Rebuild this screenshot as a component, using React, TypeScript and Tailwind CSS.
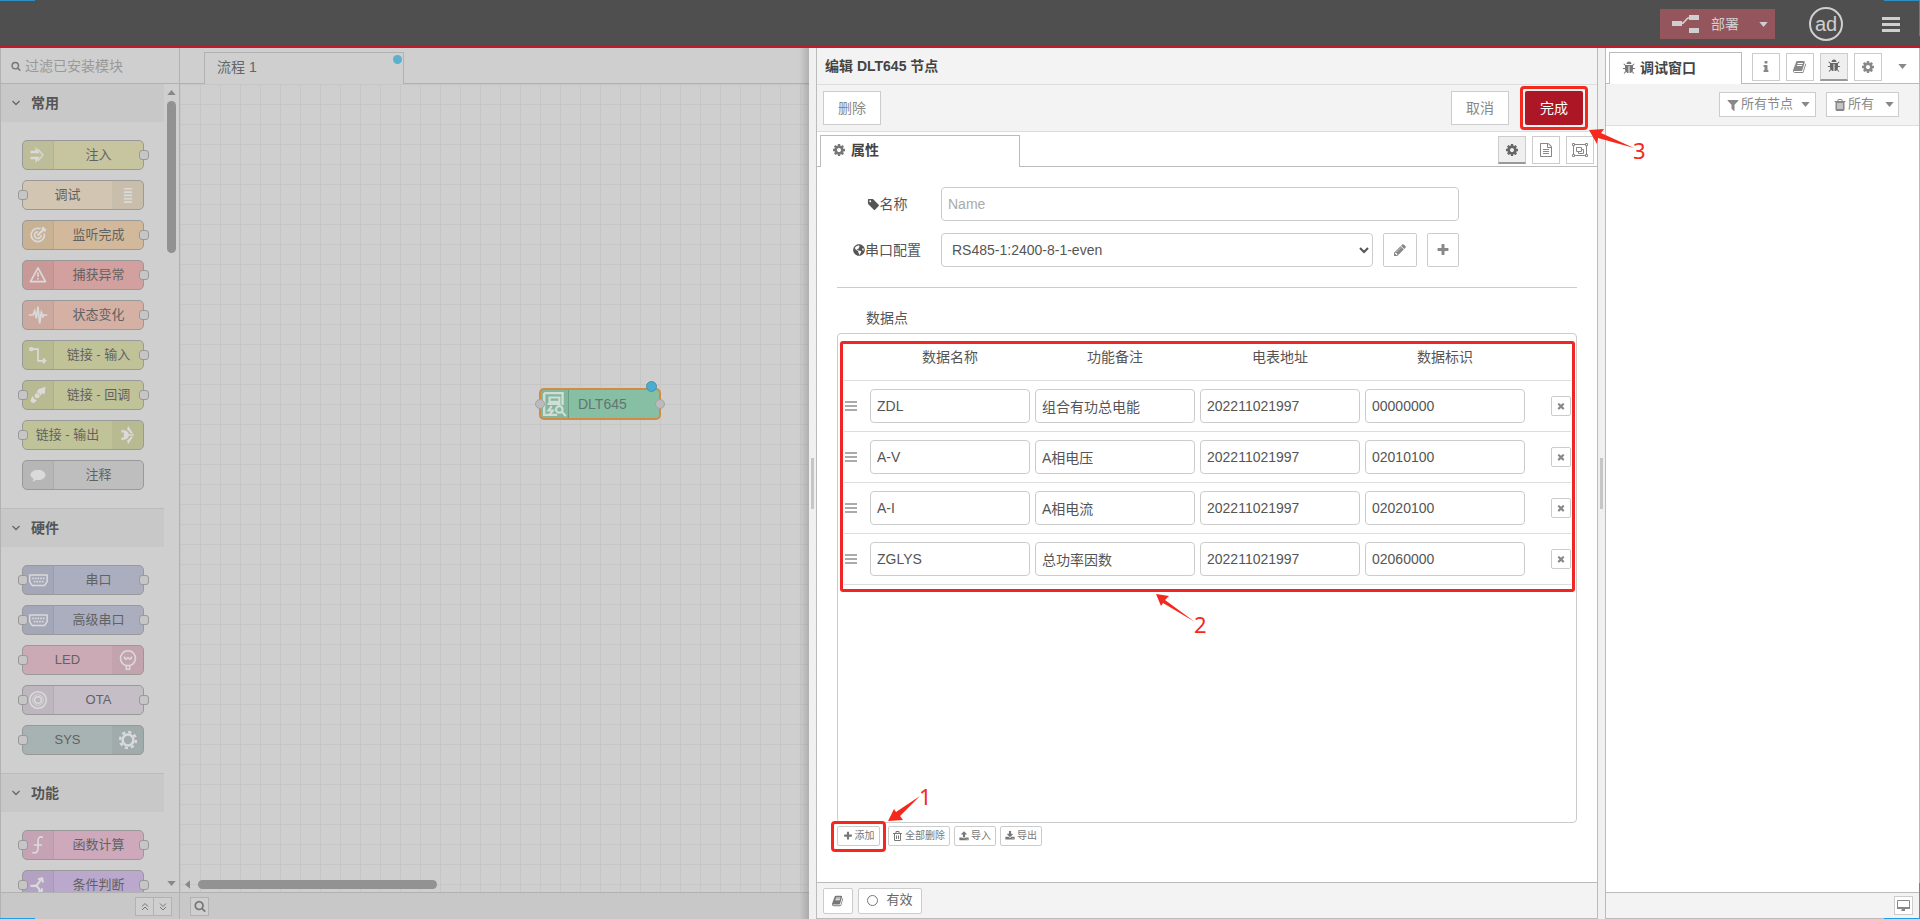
import React from "react";
import { FaGlobeAmericas } from "react-icons/fa";

const FA = {
  cog: "M1152 896q0-106-75-181t-181-75-181 75-75 181 75 181 181 75 181-75 75-181zm512-109v222q0 12-8 23t-20 13l-185 28q-19 54-39 91 35 50 107 138 10 12 10 25t-9 23q-27 37-99 108t-94 71q-12 0-26-9l-138-108q-44 23-91 38-16 136-29 186-7 28-36 28h-222q-14 0-24.5-8.5t-11.5-21.5l-28-184q-49-16-90-37l-141 107q-10 9-25 9-14 0-25-11-126-114-165-168-7-10-7-23 0-12 8-23 15-21 51-66.5t54-70.5q-27-50-41-99l-183-27q-13-2-21-12.5t-8-23.5v-222q0-12 8-23t19-13l186-28q14-46 39-92-40-57-107-138-10-12-10-24 0-10 9-23 26-36 98.5-107.5t94.5-71.5q13 0 26 10l138 107q44-23 91-38 16-136 29-186 7-28 36-28h222q14 0 24.5 8.5t11.5 21.5l28 184q49 16 90 37l142-107q9-9 24-9 13 0 25 10 129 119 165 170 7 8 7 22 0 12-8 23-15 21-51 66.5t-54 70.5q26 50 41 98l183 28q13 2 21 12.5t8 23.5z",
  search: "M1216 832q0-185-131.5-316.5t-316.5-131.5-316.5 131.5-131.5 316.5 131.5 316.5 316.5 131.5 316.5-131.5 131.5-316.5zm512 832q0 52-38 90t-90 38q-54 0-90-38l-343-342q-179 124-399 124-143 0-273.5-55.5t-225-150-150-225-55.5-273.5 55.5-273.5 150-225 225-150 273.5-55.5 273.5 55.5 225 150 150 225 55.5 273.5q0 220-124 399l343 343q37 37 37 90z",
  plus: "M1600 736v192q0 40-28 68t-68 28h-416v416q0 40-28 68t-68 28h-192q-40 0-68-28t-28-68v-416h-416q-40 0-68-28t-28-68v-192q0-40 28-68t68-28h416v-416q0-40 28-68t68-28h192q40 0 68 28t28 68v416h416q40 0 68 28t28 68z",
  pencil: "M491 1536l91-91-235-235-91 91v107h128v128h107zm523-928q0-22-22-22-10 0-17 7l-542 542q-7 7-7 17 0 22 22 22 10 0 17-7l542-542q7-7 7-17zm-54-192l416 416-832 832h-416v-416zm683 96q0 53-37 90l-166 166-416-416 166-165q36-38 90-38 53 0 91 38l235 234q37 39 37 91z",
  file: "M1596 380q28 28 48 76t20 88v1152q0 40-28 68t-68 28h-1344q-40 0-68-28t-28-68v-1600q0-40 28-68t68-28h896q40 0 88 20t76 48zm-444-244v376h376q-10-29-22-41l-313-313q-12-12-41-22zm384 1528v-1024h-416q-40 0-68-28t-28-68v-416h-768v1536h1280zm-1024-864q0-14 9-23t23-9h704q14 0 23 9t9 23v64q0 14-9 23t-23 9h-704q-14 0-23-9t-9-23v-64zm736 224q14 0 23 9t9 23v64q0 14-9 23t-23 9h-704q-14 0-23-9t-9-23v-64q0-14 9-23t23-9h704zm0 256q14 0 23 9t9 23v64q0 14-9 23t-23 9h-704q-14 0-23-9t-9-23v-64q0-14 9-23t23-9h704z",
  book: "M1639 478q40 57 18 129l-275 906q-19 64-76.5 107.5t-122.5 43.5h-923q-77 0-148.5-53.5t-99.5-131.5q-24-67-2-127 0-4 3-27t4-37q1-8-3-21.5t-3-19.5q2-11 8-21t16.5-23.5 16.5-23.5q23-38 45-91.5t30-91.5q3-10 .5-30t-.5-28q3-11 17-28t17-23q21-36 42-92t25-90q1-9-2.5-32t.5-28q4-13 22-30.5t22-22.5q19-26 42.5-84.5t27.5-96.5q1-8-3-25.5t-2-26.5q2-8 9-18t18-23 17-21q8-12 16.5-30.5t15-35 16-36 19.5-32 26.5-23.5 36-11.5 47.5 5.5l-1 3q38-9 51-9h761q74 0 114 56t18 130l-274 906q-36 119-71.5 153.5t-128.5 34.5h-869q-27 0-38 15-11 16-1 43 24 70 144 70h923q29 0 56-15.5t35-41.5l300-987q7-22 5-57 38 15 59 43zm-1064 2q-4 13 2 22.5t20 9.5h608q13 0 25.5-9.5t16.5-22.5l21-64q4-13-2-22.5t-20-9.5h-608q-13 0-25.5 9.5t-16.5 22.5zm-83 256q-4 13 2 22.5t20 9.5h608q13 0 25.5-9.5t16.5-22.5l21-64q4-13-2-22.5t-20-9.5h-608q-13 0-25.5 9.5t-16.5 22.5z",
  tag: "M576 448q0-53-37.5-90.5t-90.5-37.5-90.5 37.5-37.5 90.5 37.5 90.5 90.5 37.5 90.5-37.5 37.5-90.5zm1067 576q0 53-37 90l-491 492q-39 37-91 37-53 0-90-37l-715-716q-38-37-64.5-101t-26.5-117v-416q0-52 38-90t90-38h416q53 0 117 26.5t102 64.5l715 714q37 39 37 91z",
  times: "M1490 1322q0 40-28 68l-136 136q-28 28-68 28t-68-28l-294-294-294 294q-28 28-68 28t-68-28l-136-136q-28-28-28-68t28-68l294-294-294-294q-28-28-28-68t28-68l136-136q28-28 68-28t68 28l294 294 294-294q28-28 68-28t68 28l136 136q28 28 28 68t-28 68l-294 294 294 294q28 28 28 68z",
  download: "M1344 1344q0-26-19-45t-45-19-45 19-19 45 19 45 45 19 45-19 19-45zm256 0q0-26-19-45t-45-19-45 19-19 45 19 45 45 19 45-19 19-45zm128-224v320q0 40-28 68t-68 28h-1472q-40 0-68-28t-28-68v-320q0-40 28-68t68-28h465l135 136q58 56 136 56t136-56l136-136h464q40 0 68 28t28 68zm-325-569q17 41-14 70l-448 448q-18 19-45 19t-45-19l-448-448q-31-29-14-70 17-39 59-39h256v-448q0-26 19-45t45-19h256q26 0 45 19t19 45v448h256q42 0 59 39z",
  upload: "M1344 1472q0-26-19-45t-45-19-45 19-19 45 19 45 45 19 45-19 19-45zm256 0q0-26-19-45t-45-19-45 19-19 45 19 45 45 19 45-19 19-45zm128-224v320q0 40-28 68t-68 28h-1472q-40 0-68-28t-28-68v-320q0-40 28-68t68-28h427q21 56 70.5 92t110.5 36h256q61 0 110.5-36t70.5-92h427q40 0 68 28t28 68zm-325-648q-17 40-59 40h-256v448q0 26-19 45t-45 19h-256q-26 0-45-19t-19-45v-448h-256q-42 0-59-40-17-39 14-69l448-448q18-19 45-19t45 19l448 448q31 30 14 69z",
  filter: "M1595 295q17 41-14 70l-493 493v742q0 42-39 59-13 5-25 5-27 0-45-19l-256-256q-19-19-19-45v-486l-493-493q-31-29-14-70 17-39 59-39h1280q42 0 59 39z",
  trash: "M704 1376v-704q0-14-9-23t-23-9h-64q-14 0-23 9t-9 23v704q0 14 9 23t23 9h64q14 0 23-9t9-23zm256 0v-704q0-14-9-23t-23-9h-64q-14 0-23 9t-9 23v704q0 14 9 23t23 9h64q14 0 23-9t9-23zm256 0v-704q0-14-9-23t-23-9h-64q-14 0-23 9t-9 23v704q0 14 9 23t23 9h64q14 0 23-9t9-23zm-544-992h448l-48-117q-7-9-17-11h-317q-10 2-17 11zm928 32v64q0 14-9 23t-23 9h-96v948q0 83-47 143.5t-113 60.5h-832q-66 0-113-58.5t-47-141.5v-952h-96q-14 0-23-9t-9-23v-64q0-14 9-23t23-9h309l70-167q15-37 54-63t79-26h320q40 0 79 26t54 63l70 167h309q14 0 23 9t9 23z",
  bug: "M1696 960q0 26-19 45t-45 19h-224q0 171-67 290l208 209q19 19 19 45t-19 45q-18 19-45 19t-45-19l-198-197q-5 5-15 13t-42 28.5-65 36.5-82 29-97 13v-896h-128v896q-51 0-101.5-13.5t-87-33-66-39-43.5-32.5l-15-14-183 207q-20 21-48 21-24 0-43-16-19-18-20.5-44.5t15.5-46.5l202-227q-58-114-58-274h-224q-26 0-45-19t-19-45 19-45 45-19h224v-294l-173-173q-19-19-19-45t19-45 45-19 45 19l173 173h844l173-173q19-19 45-19t45 19 19 45-19 45l-173 173v294h224q26 0 45 19t19 45zm-480-576h-640q0-133 93.5-226.5t226.5-93.5 226.5 93.5 93.5 226.5z",
  info: "M1216 1344v128q0 26-19 45t-45 19h-512q-26 0-45-19t-19-45v-128q0-26 19-45t45-19h64v-384h-64q-26 0-45-19t-19-45v-128q0-26 19-45t45-19h384q26 0 45 19t19 45v576h64q26 0 45 19t19 45zm-128-1152v192q0 26-19 45t-45 19h-256q-26 0-45-19t-19-45v-192q0-26 19-45t45-19h256q26 0 45 19t19 45z",
};

function Fa({ name, className = "size-3.5" }: { name: keyof typeof FA; className?: string }) {
  return (
    <svg viewBox="0 0 1792 1792" fill="currentColor" aria-hidden="true" className={"shrink-0 " + className}>
      <path d={FA[name]} />
    </svg>
  );
}

function Caret({ className = "" }: { className?: string }) {
  return (
    <svg viewBox="0 0 10 6" fill="currentColor" aria-hidden="true" className={"h-[5px] w-[9px] shrink-0 " + className}>
      <path d="M0 0h10L5 6z" />
    </svg>
  );
}

function TrashOutline() {
  return (
    <svg viewBox="0 0 10 11" fill="none" stroke="currentColor" className="h-[11px] w-2.5 shrink-0" aria-hidden="true">
      <path d="M0 2.500h9M3 2V.5h3V2M1.500 2.500v7h6v-7M3.500 4.500V8M5.500 4.500V8" />
    </svg>
  );
}

function ObjectGroup() {
  return (
    <svg viewBox="0 0 16 14" fill="none" stroke="currentColor" className="h-3.5 w-4" aria-hidden="true">
      <path d="M2.500 1.500h11M2.500 12.500h11M1.500 2.500v9M14.500 2.500v9" />
      <path d="M.5.5h2v2h-2zM13.500.5h2v2h-2zM.5 11.500h2v2h-2zM13.500 11.500h2v2h-2z" />
      <path d="M4.500 4.500h5v4h-5zM9.500 6.500h2v4h-5v-2" />
    </svg>
  );
}

const icons: Record<string, React.ReactNode> = {
  inject: (
    <g fill="currentColor">
      <path d="M3 7h6V2l5 8H3zM3 14h11l-5 8v-5H3z" />
      <path d="M12 5l6 7-6 7" fill="none" stroke="currentColor" strokeWidth="1.500" />
    </g>
  ),
  debug: <path d="M7 4.500h10M7 8.500h10M7 12.500h10M7 16.500h10M7 20.500h10" stroke="currentColor" strokeWidth="2" />,
  complete: (
    <g fill="none" stroke="currentColor" strokeWidth="2">
      <path d="M15 4.600A8 8 0 1 0 19.500 10" />
      <path d="M12 8.200a4 4 0 1 0 3.800 3.800" />
      <path d="M11.500 12.500L18 6" strokeWidth="2.500" />
      <path d="M16 3l1 4 4 1 1-3-2-1-1-2z" fill="currentColor" stroke="none" />
    </g>
  ),
  warn: (
    <g fill="none" stroke="currentColor" strokeWidth="2">
      <path d="M12 3.500L21 20H3z" strokeLinejoin="round" />
      <path d="M12 9v5M12 15.500v2" />
    </g>
  ),
  pulse: <path d="M1 12h5l2-5 2 9 2-14 2 20 2-13 2 5 1-2h4" fill="none" stroke="currentColor" strokeWidth="2" />,
  linkin: (
    <g fill="none" stroke="currentColor" strokeWidth="2">
      <path d="M4 5h8v14h8" />
      <path d="M18 16l3 3-3 3" />
      <ellipse cx="4" cy="5" rx="2" ry="1.500" />
    </g>
  ),
  linkcall: (
    <g fill="currentColor">
      <path d="M12 5l9-3-1 9-3-1-2 3a5 5 0 0 0-5-4l2-3zM4 16l2-3a5 5 0 0 0 5 5l-4 4-4-2z" />
      <circle cx="11" cy="13" r="3" />
    </g>
  ),
  linkout: (
    <g fill="currentColor">
      <path d="M12 1l6 9h-3q-1-3-4-4zM12 23l6-9h-3q-1 3-4 4z" />
      <path d="M4 6q8 0 9 5h6v2h-6q-1 5-9 5v-3h3v-6H4z" />
    </g>
  ),
  comment: <path d="M12 6c5 0 9 2.500 9 6s-4 6-9 6l-2-.2Q8 20 5 20q2-2 1.500-3.500Q3 15 3 12c0-3.500 4-6 9-6z" fill="currentColor" />,
  serial: (
    <g fill="none" stroke="currentColor" strokeWidth="1.800">
      <path d="M2 6h21v8l-3 4.500H5L2 14z" strokeLinejoin="round" />
      <path d="M5 10h15M7 14h12" strokeDasharray="2 1.200" strokeWidth="2" />
    </g>
  ),
  led: (
    <g fill="none" stroke="currentColor" strokeWidth="1.800">
      <path d="M9 18.500a9 9 0 1 1 6 0z" />
      <path d="M8 11v-2l2 2 2-2 2 2 2-2v2M10 18v5h4v-5" />
    </g>
  ),
  ota: (
    <g fill="none" stroke="currentColor" strokeWidth="1.800">
      <circle cx="12" cy="12" r="10" />
      <circle cx="12" cy="12" r="6.500" strokeWidth="1" />
      <circle cx="12" cy="12" r="4" />
    </g>
  ),
  gear: (
    <g fill="none" stroke="currentColor">
      <circle cx="12" cy="12" r="6.500" strokeWidth="3" />
      <circle cx="12" cy="12" r="9.500" strokeWidth="3" strokeDasharray="3.730 3.730" />
    </g>
  ),
  fn: <path d="M18 3q-6-3-6 5v8q0 7-7 5M7 12h10" fill="none" stroke="currentColor" strokeWidth="2" />,
  branch: (
    <g fill="none" stroke="currentColor" strokeWidth="2.500">
      <path d="M3 13h5q3 0 5-4l3-4M8 13q4 0 7 7" />
      <path d="M12 5l5-1 1 5M12 20l4 1 1-5" />
    </g>
  ),
  meter: (
    <g fill="none" stroke="currentColor" strokeWidth="2">
      <path d="M2 2v20h12M2 2h17v11" strokeWidth="2.200" />
      <path d="M7 6h9v4H7zM5 12h12" />
      <path d="M9 14l-3 4h4l-3 4" />
      <circle cx="16" cy="17" r="3" />
      <path d="M18 19l4 4" />
    </g>
  ),
};

type NodeDef = { label: string; bg: string; icon: string; right?: boolean; inp?: boolean; out?: boolean };

const groups: { title: string; nodes: NodeDef[] }[] = [
  {
    title: "常用",
    nodes: [
      { label: "注入", bg: "bg-[#c6c5a0]", icon: "inject", out: true },
      { label: "调试", bg: "bg-[#d2c6b2]", icon: "debug", right: true, inp: true },
      { label: "监听完成", bg: "bg-[#d2b99b]", icon: "complete", out: true },
      { label: "捕获异常", bg: "bg-[#d2a09f]", icon: "warn", out: true },
      { label: "状态变化", bg: "bg-[#d5b0a5]", icon: "pulse", out: true },
      { label: "链接 - 输入", bg: "bg-[#c0c298]", icon: "linkin", out: true },
      { label: "链接 - 回调", bg: "bg-[#c0c298]", icon: "linkcall", inp: true, out: true },
      { label: "链接 - 输出", bg: "bg-[#c0c298]", icon: "linkout", right: true, inp: true },
      { label: "注释", bg: "bg-[#bebebe]", icon: "comment" },
    ],
  },
  {
    title: "硬件",
    nodes: [
      { label: "串口", bg: "bg-[#abaebf]", icon: "serial", inp: true, out: true },
      { label: "高级串口", bg: "bg-[#abaebf]", icon: "serial", inp: true, out: true },
      { label: "LED", bg: "bg-[#cbaab5]", icon: "led", right: true, inp: true },
      { label: "OTA", bg: "bg-[#c6bec6]", icon: "ota", inp: true, out: true },
      { label: "SYS", bg: "bg-[#a7b2b2]", icon: "gear", right: true, inp: true },
    ],
  },
  {
    title: "功能",
    nodes: [
      { label: "函数计算", bg: "bg-[#cea9bc]", icon: "fn", inp: true, out: true },
      { label: "条件判断", bg: "bg-[#bba9cd]", icon: "branch", inp: true, out: true },
    ],
  },
];

function Port({ side }: { side: string }) {
  return <span className={"absolute top-[9px] size-2.5 rounded-[3px] border border-[#999] bg-[#c6c6c6] " + side} />;
}

function PaletteNode({ node }: { node: NodeDef }) {
  return (
    <div
      className={
        "relative flex h-[30px] w-[122px] items-stretch rounded-[5px] border border-[#999] " +
        node.bg +
        (node.right ? " flex-row-reverse" : "")
      }
    >
      <span
        className={
          "flex w-[31px] items-center justify-center bg-black/4 text-[#dadada] " +
          (node.right ? "rounded-r-[4px]" : "rounded-l-[4px] border-r border-black/6")
        }
      >
        <svg viewBox="0 0 24 24" className="size-5" aria-hidden="true">
          {icons[node.icon]}
        </svg>
      </span>
      <span className="flex-1 text-center text-[13px] leading-7 whitespace-nowrap text-[#626262]">{node.label}</span>
      {node.inp && <Port side="-left-[5px]" />}
      {node.out && <Port side="-right-[6px]" />}
    </div>
  );
}

function Palette() {
  return (
    <aside className="flex w-45 shrink-0 flex-col border-x border-[#b2b2b2] bg-[#cfcfcf]">
      <label className="flex h-9 shrink-0 items-center gap-1 border-b border-[#b2b2b2] pl-2.5 text-[#777]">
        <Fa name="search" className="size-2.5" />
        <input
          aria-label="过滤已安装模块"
          placeholder="过滤已安装模块"
          className="w-full min-w-0 bg-transparent text-sm outline-none placeholder:text-[#999]"
        />
      </label>
      <div className="flex min-h-0 flex-1">
        <div className="min-w-0 flex-1 overflow-hidden">
          {groups.map((g, i) => (
            <section key={g.title} className={i ? "border-t border-[#bbb]" : ""}>
              <button className="flex h-[38px] w-full items-center gap-[11px] bg-[#c8c8c8] pl-[11px] text-sm font-bold text-[#555]">
                <svg viewBox="0 0 8 6" className="h-1.5 w-2" fill="none" stroke="#666" strokeWidth="1.300" aria-hidden="true">
                  <path d="M.5 1L4 4.500 7.500 1" />
                </svg>
                {g.title}
              </button>
              <div className="flex flex-col gap-2.5 py-4.5 pl-[21px]">
                {g.nodes.map((n) => (
                  <PaletteNode key={n.label} node={n} />
                ))}
              </div>
            </section>
          ))}
        </div>
        <div className="flex w-[15px] shrink-0 flex-col items-center pt-1.5 pb-1.5 text-[#888]">
          <Caret className="rotate-180" />
          <span className="mt-1.5 h-[152px] w-[9px] rounded-full bg-[#929292]" />
          <Caret className="mt-auto" />
        </div>
      </div>
      <footer className="flex h-[27px] shrink-0 items-center justify-end border-t border-[#b2b2b2] bg-[#c8c8c8] pr-[7px]">
        {["M1 4.500L4 1.500l3 3M1 8l3-3 3 3", "M1 1.500l3 3 3-3M1 5l3 3 3-3"].map((d, i) => (
          <button
            key={d}
            aria-label={i ? "展开全部" : "折叠全部"}
            className="-ml-px flex size-[19px] items-center justify-center border border-[#b2b2b2] bg-[#cfcfcf]"
          >
            <svg viewBox="0 0 8 9" className="h-[9px] w-2" fill="none" stroke="#777" aria-hidden="true">
              <path d={d} />
            </svg>
          </button>
        ))}
      </footer>
    </aside>
  );
}

function Workspace() {
  return (
    <main className="relative flex min-w-0 flex-1 flex-col overflow-hidden bg-[#cfcfcf]">
      <div className="flex h-9 shrink-0 items-end">
        <span className="w-6 border-b border-[#b2b2b2]" />
        <button className="relative h-8 w-50 border border-b-0 border-[#b2b2b2] pb-1 pl-3 text-left text-sm text-[#666]">
          流程 1
          <span className="absolute top-0.5 right-px size-[9px] rounded-full bg-[#5ab0cd]" />
        </button>
        <span className="flex-1 border-b border-[#b2b2b2]" />
      </div>
      <div className="relative flex-1 bg-[linear-gradient(to_right,#c6c6c6_1px,transparent_1px),linear-gradient(to_bottom,#c6c6c6_1px,transparent_1px)] bg-[size:20px_20px]">
        <div className="absolute top-[304px] left-[359px] flex h-8 w-[122px] rounded-[5px] border-2 border-[#d08c45] bg-[#87bfa4]">
          <span className="flex w-7 items-center justify-center border-r border-black/15 bg-black/4 text-[#d3ddd8]">
            <svg viewBox="0 0 24 24" className="size-[26px] shrink-0" aria-hidden="true">
              {icons.meter}
            </svg>
          </span>
          <span className="pl-[9px] text-sm leading-7 text-[#64756c]">DLT645</span>
          <span className="absolute top-[9px] -left-[6px] size-2.5 rounded-full border border-[#a3a3a3] bg-[#bdbabc]" />
          <span className="absolute top-[9px] -right-[6px] size-2.5 rounded-full border border-[#a3a3a3] bg-[#bdbabc]" />
          <span className="absolute -top-[9px] right-0.5 size-[11px] rounded-full border border-[#4a93ad] bg-[#4badce]" />
        </div>
        <div className="absolute bottom-[3px] left-[3px] flex items-center gap-1.5 text-[#888]">
          <Caret className="rotate-90" />
          <span className="h-[9px] w-[239px] rounded-full bg-[#929292]" />
        </div>
      </div>
      <footer className="flex h-[27px] shrink-0 items-center border-t border-[#b2b2b2] bg-[#c8c8c8] pl-2.5">
        <button aria-label="搜索" className="flex size-[19px] items-center justify-center border border-[#b2b2b2] bg-[#cfcfcf] text-[#777]">
          <Fa name="search" className="size-3" />
        </button>
      </footer>
      <div className="absolute inset-y-0 right-0 w-2.5 bg-linear-to-l from-black/15 to-transparent" />
    </main>
  );
}

const iconBtn = "flex size-7 items-center justify-center border border-[#ccc] bg-white text-[#888]";
const iconBtnOn = "flex size-7 items-center justify-center border border-b-2 border-[#ccc] border-b-[#999] bg-[#efefef] text-[#666]";
const field = "h-[34px] rounded-[4px] border border-[#ccc] bg-white text-sm text-[#555] outline-none";
const smallBtn = "flex h-5 items-center gap-0.5 rounded-[2px] border border-[#ccc] bg-white px-1 text-[10px] whitespace-nowrap text-[#777]";

const columns = ["数据名称", "功能备注", "电表地址", "数据标识"];
const rows = [
  ["ZDL", "组合有功总电能", "202211021997", "00000000"],
  ["A-V", "A相电压", "202211021997", "02010100"],
  ["A-I", "A相电流", "202211021997", "02020100"],
  ["ZGLYS", "总功率因数", "202211021997", "02060000"],
];

function Arrow({ className }: { className: string }) {
  return (
    <svg viewBox="0 0 46 20" fill="#f4281c" aria-hidden="true" className={"absolute h-5 w-[46px] " + className}>
      <path d="M0 1L15 0l-3 4 33 15L9 9l-1 6z" />
    </svg>
  );
}

function DataTable() {
  return (
    <div className="relative">
      <table className="w-full table-fixed border-separate border-spacing-0">
        <colgroup>
          <col className="w-[26px]" />
          <col className="w-[165px]" />
          <col className="w-[165px]" />
          <col className="w-[165px]" />
          <col className="w-[165px]" />
          <col />
        </colgroup>
        <thead>
          <tr>
            <th className="border-b border-[#ddd] p-0" />
            {columns.map((c) => (
              <th key={c} className="border-b border-[#ddd] pt-1.5 pr-[5px] pb-[13px] text-sm leading-5 font-normal text-[#555]">
                {c}
              </th>
            ))}
            <th className="border-b border-[#ddd] p-0" />
          </tr>
        </thead>
        <tbody>
          {rows.map((r) => (
            <tr key={r[0]}>
              <td className="border-b border-[#ddd] p-0 pl-px">
                <svg viewBox="0 0 12 10" className="h-2.5 w-3" stroke="#aaa" strokeWidth="2" aria-hidden="true">
                  <path d="M0 1h12M0 5h12M0 9h12" />
                </svg>
              </td>
              {r.map((v, i) => (
                <td key={i} className="border-b border-[#ddd] py-2 pr-[5px] pl-0">
                  <input aria-label={columns[i]} defaultValue={v} className={field + " block w-full px-1.5"} />
                </td>
              ))}
              <td className="border-b border-[#ddd] p-0">
                <button aria-label="删除" className="ml-auto flex size-5 items-center justify-center rounded-[2px] border border-[#ccc] bg-white text-[#888]">
                  <Fa name="times" className="size-2.5" />
                </button>
              </td>
            </tr>
          ))}
        </tbody>
      </table>
      <div className="pointer-events-none absolute -inset-x-1 top-0 -bottom-[7px] rounded-[3px] border-3 border-[#ee2624]" />
      <svg viewBox="0 0 40 28" fill="#f4281c" aria-hidden="true" className="absolute top-[253px] left-[312px] h-7 w-10">
        <path d="M0 0l13 2-4 4 30 22L7 9l-2 3z" />
      </svg>
      <span className="absolute top-[269px] left-[350px] font-[Noto_Sans] text-[22px] leading-7 text-[#f4281c]">2</span>
    </div>
  );
}

function Tray() {
  return (
    <div className="flex w-[789px] shrink-0 text-sm text-[#555]">
      <div className="flex w-[7px] items-center bg-[#f0f0f0] pl-0.5">
        <span className="h-[51px] w-[3px] bg-[#c6c6c6]" />
      </div>
      <section className="flex min-w-0 flex-1 flex-col border-x border-[#bbb] bg-white">
        <h2 className="h-[37px] shrink-0 border-b border-[#ddd] bg-[#f3f3f3] pl-2 text-sm leading-9 font-bold text-[#444]">
          编辑 DLT645 节点
        </h2>
        <div className="flex h-[47px] shrink-0 items-center gap-4 border-b border-[#ddd] bg-[#f3f3f3] pr-3.5 pl-1.5 text-[#888]">
          <button className="mr-auto h-[34px] w-[58px] border border-[#ccc] bg-white">删除</button>
          <button className="h-[34px] w-[58px] border border-[#ccc] bg-white">取消</button>
          <span className="relative">
            <button className="h-[34px] w-[58px] rounded-[2px] bg-[#ad1625] text-white">完成</button>
            <span className="pointer-events-none absolute -inset-[5px] rounded-[4px] border-3 border-[#f4281c]" />
            <Arrow className="top-[38px] left-16" />
            <span className="absolute top-[45px] left-[108px] font-[Noto_Sans] text-[22px] leading-7 text-[#f4281c]">3</span>
          </span>
        </div>
        <div className="flex h-[35px] shrink-0 items-end">
          <span className="w-[3px] border-b border-[#bbb]" />
          <button className="flex h-8 w-50 items-center gap-[5px] border border-b-0 border-[#bbb] pb-1 pl-[11px] font-bold text-[#444]">
            <span className="text-[#777]">
              <Fa name="cog" />
            </span>
            属性
          </button>
          <div className="flex h-full flex-1 items-center justify-end gap-1.5 border-b border-[#bbb] pt-0.5 pr-[3px]">
            <button aria-label="属性" className={iconBtnOn}>
              <Fa name="cog" />
            </button>
            <button aria-label="描述" className={iconBtn}>
              <Fa name="file" />
            </button>
            <button aria-label="外观" className={iconBtn}>
              <ObjectGroup />
            </button>
          </div>
        </div>
        <div className="flex min-h-0 flex-1 flex-col px-5 pt-5 pb-9">
          <div className="mb-3 flex items-center gap-1">
            <label htmlFor="node-name" className="flex w-25 items-center justify-center">
              <Fa name="tag" className="size-[13px]" />
              名称
            </label>
            <input id="node-name" placeholder="Name" className={field + " w-[518px] px-1.5 placeholder:text-[#aaa]"} />
          </div>
          <div className="flex items-center">
            <label htmlFor="node-serial" className="flex w-25 items-center justify-center">
              <FaGlobeAmericas className="size-3" />
              串口配置
            </label>
            <select id="node-serial" className={field + " ml-1 w-[432px] px-1.5"}>
              <option>RS485-1:2400-8-1-even</option>
            </select>
            <button aria-label="编辑串口" className="ml-2.5 flex h-[34px] w-[34px] items-center justify-center rounded-[2px] border border-[#ccc] text-[#888]">
              <Fa name="pencil" className="size-3.5" />
            </button>
            <button aria-label="新增串口" className="ml-2.5 flex h-[34px] w-8 items-center justify-center rounded-[2px] border border-[#ccc] text-[#888]">
              <Fa name="plus" className="size-3.5" />
            </button>
          </div>
          <hr className="my-5 border-[#ccc]" />
          <div className="w-25 text-center leading-5">数据点</div>
          <div className="mt-[5px] flex-1 rounded-[4px] border border-[#ccc] pt-[7px] pr-[5px] pl-1.5">
            <DataTable />
          </div>
          <div className="relative mt-[3px] flex gap-1">
            <button className={smallBtn + " mr-1 w-[43px] justify-center"}>
              <Fa name="plus" className="size-2.5" />
              添加
            </button>
            <button className={smallBtn}>
              <TrashOutline />
              全部删除
            </button>
            <button className={smallBtn}>
              <Fa name="upload" className="size-2.5" />
              导入
            </button>
            <button className={smallBtn}>
              <Fa name="download" className="size-2.5" />
              导出
            </button>
            <span className="pointer-events-none absolute -top-[5px] -left-1.5 h-[31px] w-[55px] rounded-[4px] border-3 border-[#f4281c]" />
            <svg viewBox="0 0 33 25" fill="#f4281c" aria-hidden="true" className="absolute -top-[30px] left-[51px] h-[25px] w-[33px]">
              <path d="M0 25L6 13l2 3L32 0 12 20l3 4z" />
            </svg>
            <span className="absolute -top-[44px] left-[82px] font-[Noto_Sans] text-[22px] leading-7 text-[#f4281c]">1</span>
          </div>
        </div>
        <footer className="flex h-[37px] shrink-0 items-center gap-[5px] border-y border-[#bbb] bg-[#f3f3f3] pl-1.5">
          <button aria-label="帮助" className="flex h-[26px] w-[30px] items-center justify-center rounded-[2px] border border-[#ccc] bg-white text-[#777]">
            <Fa name="book" className="size-3" />
          </button>
          <button className="flex h-[26px] w-16 items-center justify-center gap-2 rounded-[2px] border border-[#ccc] bg-white text-[13px] text-[#666]">
            <span className="size-[11px] rounded-full border border-[#777]" />
            有效
          </button>
        </footer>
      </section>
    </div>
  );
}

function Sidebar() {
  return (
    <aside className="flex w-[315px] shrink-0 flex-col border-x border-[#bbb] bg-white text-sm text-[#888]">
      <div className="flex h-9 shrink-0 items-end">
        <span className="w-[3px] border-b border-[#bbb]" />
        <button className="flex h-8 w-[133px] items-center gap-1 border border-b-0 border-[#bbb] pb-0.5 pl-3 font-bold text-[#444]">
          <span className="text-[#777]">
            <Fa name="bug" />
          </span>
          调试窗口
        </button>
        <div className="flex h-full flex-1 items-center justify-end gap-1.5 border-b border-[#bbb] pt-0.5 pr-3">
          <button aria-label="信息" className={iconBtn}>
            <Fa name="info" />
          </button>
          <button aria-label="帮助" className={iconBtn}>
            <Fa name="book" />
          </button>
          <button aria-label="调试窗口" className={iconBtnOn}>
            <Fa name="bug" />
          </button>
          <button aria-label="设置" className={iconBtn}>
            <Fa name="cog" />
          </button>
          <button aria-label="更多" className="pl-2.5">
            <Caret />
          </button>
        </div>
      </div>
      <div className="flex h-[42px] shrink-0 items-center justify-end gap-2.5 border-b border-[#ddd] bg-[#f3f3f3] pr-5">
        <button className="flex h-[25px] w-[97px] items-center border border-[#ccc] bg-white pl-1.5 text-[13px]">
          <Fa name="filter" />
          <span className="ml-px">所有节点</span>
          <Caret className="ml-2" />
        </button>
        <button className="flex h-[25px] w-[73px] items-center border border-[#ccc] bg-white pl-1.5 text-[13px]">
          <Fa name="trash" />
          <span className="ml-px">所有</span>
          <Caret className="ml-[11px]" />
        </button>
      </div>
      <div className="flex-1" />
      <footer className="flex h-[27px] shrink-0 items-center justify-end border-y border-[#bbb] bg-[#f3f3f3] pr-1.5">
        <button aria-label="弹出窗口" className="flex size-[19px] items-center justify-center border border-[#ccc] bg-white">
          <svg viewBox="0 0 13 11" className="h-[11px] w-[13px]" aria-hidden="true">
            <path d="M.5.5h12v7H.5z" fill="none" stroke="#888" />
            <path d="M0 7h13v2H0zM5 9h3v2H4z" fill="#888" />
          </svg>
        </button>
      </footer>
    </aside>
  );
}

export default function App() {
  return (
    <div className="relative flex h-screen flex-col overflow-hidden bg-[#f0f0f0] font-['Liberation_Sans','Noto_Sans_CJK_SC',sans-serif]">
      <header className="flex h-12 shrink-0 items-center justify-end border-b-2 border-[#c01b2b] bg-[#4f4f4f] pr-5 text-[#cfcfcf]">
        <button className="mt-0.5 flex h-[30px] w-[115px] items-center bg-[#95555c] pl-3 text-sm">
          <svg viewBox="0 0 28 20" className="h-5 w-7" fill="currentColor" aria-hidden="true">
            <path d="M0 7h10v5H0zM17 1h10v5H17zM17 14h10v5H17z" />
            <path d="M9 9.500c5 0 4-6 9-6" fill="none" stroke="currentColor" strokeWidth="1.500" />
          </svg>
          <span className="ml-[11px]">部署</span>
          <Caret className="ml-5" />
        </button>
        <button aria-label="用户" className="mt-0.5 ml-[34px] flex size-[34px] items-center justify-center rounded-full border-2 border-[#cfcfcf] text-xl leading-none">
          ad
        </button>
        <button aria-label="菜单" className="mt-0.5 ml-[39px]">
          <svg viewBox="0 0 18 15" className="h-[15px] w-[18px]" fill="currentColor" aria-hidden="true">
            <path d="M0 0h18v3H0zM0 6h18v3H0zM0 12h18v3H0z" />
          </svg>
        </button>
      </header>
      <div className="flex min-h-0 flex-1">
        <Palette />
        <Workspace />
        <Tray />
        <div className="flex w-[7px] shrink-0 items-center justify-center">
          <span className="h-[51px] w-[3px] bg-[#c6c6c6]" />
        </div>
        <Sidebar />
      </div>
      <span className="absolute top-0 left-0 h-px w-[35px] bg-[#2f8fc5]" />
      <span className="absolute bottom-0 left-0 h-px w-[35px] bg-[#1a9fee]" />
      <span className="absolute top-0 right-0 size-9 border-t border-r border-[#2f8fc5]" />
      <span className="absolute right-0 bottom-0 size-9 border-r border-b border-[#1a9fee]" />
    </div>
  );
}
